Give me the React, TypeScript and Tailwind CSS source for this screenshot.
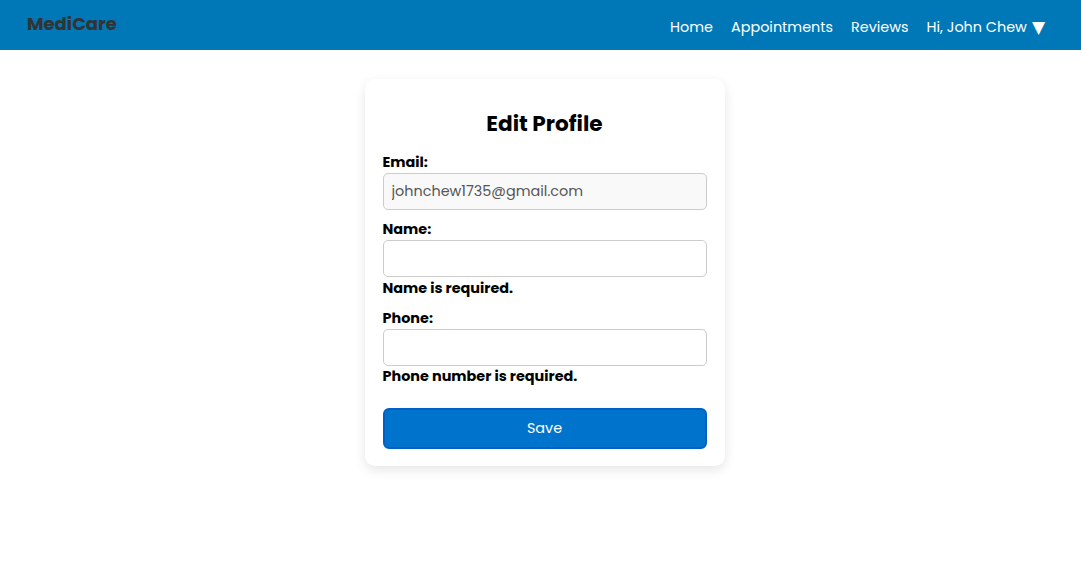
import { useState } from "react";

const font = { fontFamily: '"Poppins", "DejaVu Sans", "Open Sans", sans-serif' };

export default function App() {
  const [name, setName] = useState("");
  const [phone, setPhone] = useState("");

  return (
    <div className="min-h-screen bg-white" style={font}>
      {/* Navbar */}
      <nav className="flex h-[50px] items-center justify-between bg-[#0077b6] pl-[27px] pr-[36px]">
        <span className="pb-[3px] text-[18px] font-bold text-[#333333]">MediCare</span>
        <div className="flex items-center gap-[18px] pt-[6px] text-[14.4px] text-white">
          <a href="#">Home</a>
          <a href="#">Appointments</a>
          <a href="#">Reviews</a>
          <span className="flex items-center">
            Hi, John Chew
            <span className="ml-[5px] text-[17px] leading-none">▼</span>
          </span>
        </div>
      </nav>

      {/* Edit profile card */}
      <div className="flex justify-center pl-[8px]">
        <div className="mt-[29px] w-[360px] rounded-[10px] bg-white px-[18px] pb-[17px] pt-[20px] shadow-[0_4px_12px_rgba(0,0,0,0.1)]">
          <h2 className="h-[50px] pt-[1px] text-center text-[21.6px] font-bold leading-[48px] text-black">Edit Profile</h2>

          <div className="mt-[3px] mb-[9px]">
            <label className="block text-[14.4px] font-bold leading-[21px] text-black">Email:</label>
            <input
              disabled
              value="johnchew1735@gmail.com"
              className="h-[37px] w-full rounded-[5px] border border-[#cccccc] bg-[#f9f9f9] px-[8px] text-[14.4px] text-[#555555]"
            />
          </div>

          <div className="mb-[9px]">
            <label className="block text-[14.4px] font-bold leading-[21px] text-black">Name:</label>
            <input
              value={name}
              onChange={(e) => setName(e.target.value)}
              className="h-[37px] w-full rounded-[5px] border border-[#cccccc] bg-white px-[8px] text-[14.4px]"
            />
            <p className="pt-[1px] text-[14.4px] font-bold leading-[21px] text-black">Name is required.</p>
          </div>

          <div className="mb-[21px]">
            <label className="block text-[14.4px] font-bold leading-[21px] text-black">Phone:</label>
            <input
              value={phone}
              onChange={(e) => setPhone(e.target.value)}
              className="h-[37px] w-full rounded-[5px] border border-[#cccccc] bg-white px-[8px] text-[14.4px]"
            />
            <p className="text-[14.4px] font-bold leading-[21px] text-black">Phone number is required.</p>
          </div>

          <button className="h-[41px] w-full rounded-[6px] border-2 border-[#0060c8] bg-[#0074cc] text-[14.4px] text-white">
            Save
          </button>
        </div>
      </div>
    </div>
  );
}
